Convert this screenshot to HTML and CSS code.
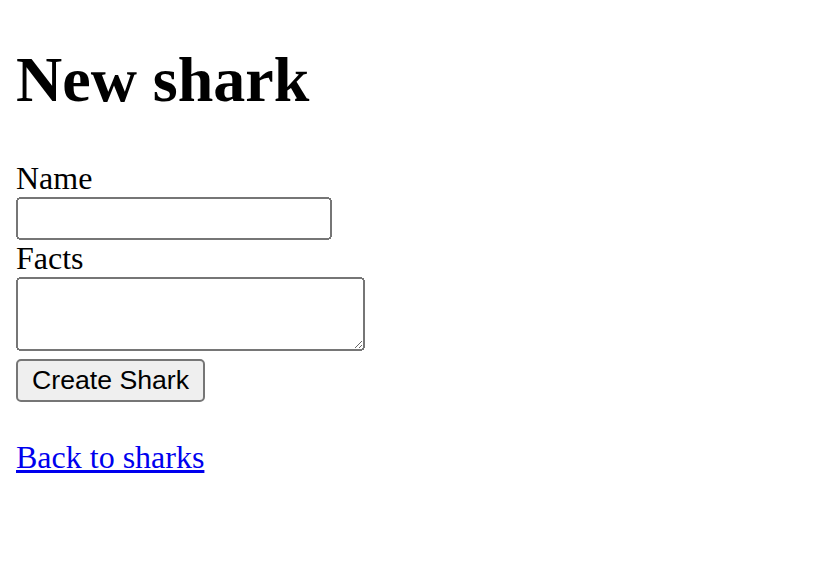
FILE: index.html
```html
<!DOCTYPE html>
<html>
<head>
<meta charset="utf-8">
<title>New shark</title>
<link rel="stylesheet" href="styles.css">
</head>
<body class="page">
<h1 class="title">New shark</h1>
<form class="shark-form" onsubmit="return false">
  <div>
    <label class="field-label" for="shark_name">Name</label>
    <input class="text-field" type="text" id="shark_name" name="shark[name]">
  </div>
  <div>
    <label class="field-label" for="shark_facts">Facts</label>
    <textarea id="shark_facts" name="shark[facts]"></textarea>
  </div>
  <div>
    <input type="submit" value="Create Shark">
  </div>
</form>
<br>
<div>
  <a href="#">Back to sharks</a>
</div>
</body>
</html>
```
FILE: styles.css
```css
html {
  zoom: 2;
}
.page {
  margin: 8px;
  font-family: "Liberation Serif", "Times New Roman", serif;
  background: #fff;
  color: #000;
}
.title {
  font-family: "Liberation Serif", "Times New Roman", serif;
  margin-top: 13.44px;
}
.field-label {
  display: block;
}
.text-field {
  box-sizing: border-box;
  width: 158px;
}
```
